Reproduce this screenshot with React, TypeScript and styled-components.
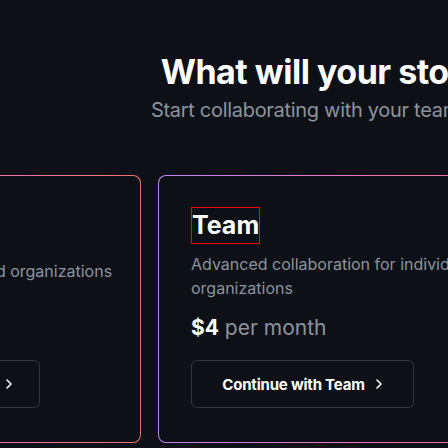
import React from 'react';
import styled, { createGlobalStyle } from 'styled-components';

const GlobalStyle = createGlobalStyle`
    html, body {
        margin: 0;
        padding: 0;
        background: #0d1117;
    }
    body {
        font-family: Inter, "Noto Sans", sans-serif;
        -webkit-font-smoothing: antialiased;
    }
`;

type Plan = {
    name: string;
    description: string;
    price: string;
    action: string;
    buttonWidth: number;
    singleLine: boolean;
};

const plans: Plan[] = [
    {
        name: 'Free',
        description: 'The basics for individuals and organizations',
        price: '$0',
        action: 'Continue with GitHub Free',
        buttonWidth: 260,
        singleLine: true,
    },
    {
        name: 'Team',
        description: 'Advanced collaboration for individuals and organizations',
        price: '$4',
        action: 'Continue with Team',
        buttonWidth: 223,
        singleLine: false,
    },
    {
        name: 'Enterprise',
        description: 'Security, compliance, and flexible deployment',
        price: '$21',
        action: 'Continue with Enterprise',
        buttonWidth: 260,
        singleLine: true,
    },
];

const ChevronIcon = () => (
    <svg width='8' height='12' viewBox='0 0 8 12' fill='none'>
        <path
            d='M2 2l4 4-4 4'
            stroke='currentColor'
            strokeWidth='1.6'
            strokeLinecap='round'
            strokeLinejoin='round'
        />
    </svg>
);

const App = () => {
    return (
        <Page>
            <GlobalStyle />
            <Stage>
                <Header>
                    <Title>What will your story be?</Title>
                    <Subtitle>Start collaborating with your team in minutes</Subtitle>
                </Header>
                <CardRow>
                    {plans.map((plan) => (
                        <Card key={plan.name}>
                            <PlanName $outlined={plan.name === 'Team'}>{plan.name}</PlanName>
                            <Description $single={plan.singleLine}>
                                {plan.description}
                            </Description>
                            <Price>
                                <strong>{plan.price}</strong> per month
                            </Price>
                            <ContinueButton $width={plan.buttonWidth}>
                                {plan.action}
                                <ChevronIcon />
                            </ContinueButton>
                        </Card>
                    ))}
                </CardRow>
            </Stage>
        </Page>
    );
};

const Page = styled.div`
    width: 448px;
    height: 448px;
    overflow: hidden;
    background: #0d1117;
`;

const Stage = styled.div`
    width: 1216px;
    margin-left: -253px;
    padding-top: 50px;
`;

const Header = styled.div`
    text-align: center;
    white-space: nowrap;
`;

const Title = styled.h1`
    margin: 0;
    font-size: 34px;
    line-height: 44px;
    font-weight: 700;
    color: #ffffff;
    letter-spacing: -0.5px;
`;

const Subtitle = styled.p`
    margin: 2px 0 0;
    font-size: 20px;
    line-height: 28px;
    color: #8b949e;
    letter-spacing: -0.3px;
`;

const CardRow = styled.div`
    display: grid;
    grid-template-columns: repeat(3, 394px);
    gap: 17px;
    margin-top: 51px;
`;

const Card = styled.div`
    height: 268px;
    box-sizing: border-box;
    padding: 31px 32px 32px;
    border: 1px solid transparent;
    border-radius: 8px;
    background:
        linear-gradient(#0d1117, #0d1117) padding-box,
        linear-gradient(90deg, #c084fc 0%, #f472b6 55%, #f0716a 100%) border-box;
    display: flex;
    flex-direction: column;
    align-items: flex-start;
`;

const PlanName = styled.h2<{ $outlined: boolean }>`
    margin: 0;
    font-size: 25px;
    line-height: 35px;
    font-weight: 700;
    color: #ffffff;
    border: 1px solid ${({ $outlined }) => ($outlined ? '#ff0000' : 'transparent')};
`;

const Description = styled.p<{ $single: boolean }>`
    margin: ${({ $single }) => ($single ? 15 : 8)}px 0 0;
    min-height: ${({ $single }) => ($single ? 41 : 48)}px;
    font-size: 16px;
    line-height: 24px;
    color: #8b949e;
    white-space: ${({ $single }) => ($single ? 'nowrap' : 'normal')};
`;

const Price = styled.p`
    margin: 12px 0 0;
    font-size: 21px;
    line-height: 32px;
    color: #8b949e;

    strong {
        color: #ffffff;
        font-weight: 700;
    }
`;

const ContinueButton = styled.button<{ $width: number }>`
    margin-top: 16px;
    width: ${({ $width }) => $width}px;
    height: 48px;
    box-sizing: border-box;
    display: flex;
    align-items: center;
    justify-content: center;
    gap: 10px;
    background: transparent;
    border: 1px solid #30363d;
    border-radius: 6px;
    color: #ffffff;
    font-family: Inter, "Noto Sans", sans-serif;
    font-size: 15px;
    font-weight: 700;
    letter-spacing: -0.2px;
    white-space: nowrap;
    cursor: pointer;
`;

export default App;
